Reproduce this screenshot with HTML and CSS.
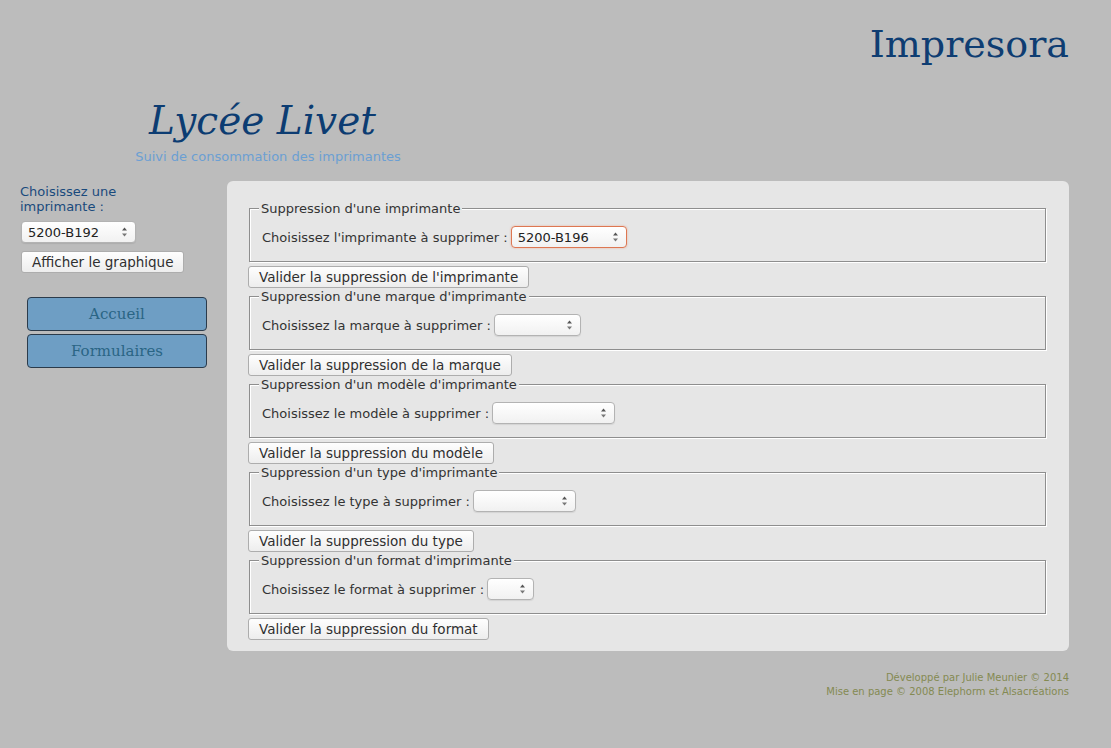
FILE: index.html
```html
<!DOCTYPE html>
<html lang="fr">
<head>
<meta charset="utf-8">
<title>Impresora</title>
<link rel="stylesheet" href="styles.css">
</head>
<body>
<div class="page">
  <header class="top">
    <h1 class="app-title">Impresora</h1>
  </header>
  <div class="school">
    <h2 class="school-name">Lycée Livet</h2>
    <p class="school-sub">Suivi de consommation des imprimantes</p>
  </div>
  <div class="main">
    <aside class="sidebar">
      <label class="side-label" for="imp">Choisissez une imprimante :</label>
      <span class="sel sel-side">
        <select id="imp"><option>5200-B192</option></select>
        <svg class="arrows" width="7" height="10" viewBox="0 0 7 10"><path d="M3.5 0.5 L6 3.5 L1 3.5 Z" fill="#555"/><path d="M1 6.5 L6 6.5 L3.5 9.5 Z" fill="#777"/></svg>
      </span>
      <button class="btn side-btn">Afficher le graphique</button>
      <nav class="nav">
        <a class="nav-item" href="#">Accueil</a>
        <a class="nav-item" href="#">Formulaires</a>
      </nav>
    </aside>
    <section class="panel">
      <fieldset class="group">
        <legend>Suppression d'une imprimante</legend>
        <div class="row">
          <label>Choisissez l'imprimante à supprimer :</label>
          <span class="sel sel-imp focused">
            <select><option>5200-B196</option></select>
            <svg class="arrows" width="7" height="10" viewBox="0 0 7 10"><path d="M3.5 0.5 L6 3.5 L1 3.5 Z" fill="#555"/><path d="M1 6.5 L6 6.5 L3.5 9.5 Z" fill="#777"/></svg>
          </span>
        </div>
      </fieldset>
      <button class="btn">Valider la suppression de l'imprimante</button>

      <fieldset class="group">
        <legend>Suppression d'une marque d'imprimante</legend>
        <div class="row">
          <label>Choisissez la marque à supprimer :</label>
          <span class="sel sel-marque">
            <select></select>
            <svg class="arrows" width="7" height="10" viewBox="0 0 7 10"><path d="M3.5 0.5 L6 3.5 L1 3.5 Z" fill="#555"/><path d="M1 6.5 L6 6.5 L3.5 9.5 Z" fill="#777"/></svg>
          </span>
        </div>
      </fieldset>
      <button class="btn">Valider la suppression de la marque</button>

      <fieldset class="group">
        <legend>Suppression d'un modèle d'imprimante</legend>
        <div class="row">
          <label>Choisissez le modèle à supprimer :</label>
          <span class="sel sel-modele">
            <select></select>
            <svg class="arrows" width="7" height="10" viewBox="0 0 7 10"><path d="M3.5 0.5 L6 3.5 L1 3.5 Z" fill="#555"/><path d="M1 6.5 L6 6.5 L3.5 9.5 Z" fill="#777"/></svg>
          </span>
        </div>
      </fieldset>
      <button class="btn">Valider la suppression du modèle</button>

      <fieldset class="group">
        <legend>Suppression d'un type d'imprimante</legend>
        <div class="row">
          <label>Choisissez le type à supprimer :</label>
          <span class="sel sel-type">
            <select></select>
            <svg class="arrows" width="7" height="10" viewBox="0 0 7 10"><path d="M3.5 0.5 L6 3.5 L1 3.5 Z" fill="#555"/><path d="M1 6.5 L6 6.5 L3.5 9.5 Z" fill="#777"/></svg>
          </span>
        </div>
      </fieldset>
      <button class="btn">Valider la suppression du type</button>

      <fieldset class="group">
        <legend>Suppression d'un format d'imprimante</legend>
        <div class="row">
          <label>Choisissez le format à supprimer :</label>
          <span class="sel sel-format">
            <select></select>
            <svg class="arrows" width="7" height="10" viewBox="0 0 7 10"><path d="M3.5 0.5 L6 3.5 L1 3.5 Z" fill="#555"/><path d="M1 6.5 L6 6.5 L3.5 9.5 Z" fill="#777"/></svg>
          </span>
        </div>
      </fieldset>
      <button class="btn">Valider la suppression du format</button>
    </section>
  </div>
  <footer class="footer">
    <p>Développé par Julie Meunier © 2014</p>
    <p>Mise en page © 2008 Elephorm et Alsacréations</p>
  </footer>
</div>
</body>
</html>
```
FILE: styles.css
```css
html, body {
  margin: 0;
  padding: 0;
  background: #bcbcbc;
}
body {
  font-family: "DejaVu Sans", sans-serif;
  font-size: 13px;
  color: #333;
}
.page {
  width: 1111px;
  height: 748px;
  box-sizing: border-box;
  padding-right: 42px;
  overflow: hidden;
}
.top {
  text-align: right;
}
.app-title {
  margin: 21px 0 0;
  font-family: "DejaVu Serif", serif;
  font-weight: normal;
  font-size: 38px;
  line-height: 46px;
  color: #0e3d72;
}
.school {
  width: 536px;
  text-align: center;
  margin-top: 30px;
}
.school-name {
  margin: 0;
  padding-right: 11px;
  font-family: "DejaVu Serif", serif;
  font-style: italic;
  font-weight: normal;
  font-size: 39px;
  line-height: 48px;
  color: #0c3c72;
}
.school-sub {
  margin: 4px 0 0;
  font-size: 13px;
  line-height: 16px;
  color: #6b9fd3;
}
.main {
  display: flex;
  margin-top: 16px;
  align-items: flex-start;
}
.sidebar {
  width: 227px;
  flex: none;
  display: flex;
  flex-direction: column;
  align-items: flex-start;
}
.side-label {
  display: block;
  width: 150px;
  margin: 3px 0 0 20px;
  line-height: 15px;
  color: #194a7c;
}
.sel {
  position: relative;
  display: inline-block;
  vertical-align: middle;
  height: 22px;
}
.sel select {
  -webkit-appearance: none;
  appearance: none;
  box-sizing: border-box;
  width: 100%;
  height: 22px;
  margin: 0;
  padding: 0 20px 0 6px;
  border: 1px solid #b3b3b3;
  border-radius: 4px;
  background: linear-gradient(#ffffff, #f1f1f1);
  box-shadow: 0 1px 1px rgba(0,0,0,0.08);
  font-family: "DejaVu Sans", sans-serif;
  font-size: 13px;
  color: #222;
  outline: none;
}
.sel .arrows {
  position: absolute;
  right: 8px;
  top: 6px;
  pointer-events: none;
}
.sel.focused select {
  border-color: #dd7752;
  box-shadow: 0 0 2px rgba(240,130,90,0.6);
}
.sel-side {
  width: 115px;
  margin: 7px 0 0 21px;
}
.sel-imp { width: 116px; }
.sel-marque { width: 87px; }
.sel-modele { width: 123px; }
.sel-type { width: 103px; }
.sel-format { width: 47px; }

.btn {
  display: block;
  box-sizing: border-box;
  height: 22px;
  margin: 4px 0 1px;
  padding: 0 10px;
  border: 1px solid #adadad;
  border-radius: 3px;
  background: linear-gradient(#fefefe, #ededed);
  font-family: "DejaVu Sans", sans-serif;
  font-size: 13.5px;
  line-height: 20px;
  color: #2f2f2f;
  white-space: nowrap;
}
.side-btn {
  margin: 8px 0 0 21px;
  height: 22px;
  line-height: 20px;
}
.nav {
  display: flex;
  flex-direction: column;
  gap: 3px;
  margin: 24px 0 0 27px;
}
.nav-item {
  display: block;
  box-sizing: border-box;
  width: 180px;
  height: 34px;
  line-height: 33px;
  text-align: center;
  background: #6e9ec4;
  border: 1px solid #2b3b4b;
  border-radius: 4px;
  font-family: "DejaVu Serif", serif;
  font-size: 15px;
  color: #2a6585;
  text-decoration: none;
}
.panel {
  flex: 1;
  background: #e6e6e6;
  border-radius: 6px;
  padding: 20px 21px 10px;
}
.group {
  margin: 0 2px 0 1px;
  padding: 0 9px 13px;
  border: 1px solid #8e8e8e;
  box-shadow: inset 1px 1px 0 #ffffff, 1px 1px 0 #ffffff;
}
.group legend {
  padding: 0 2px;
  font-size: 13px;
  line-height: 15px;
  color: #333;
  background: #e6e6e6;
}
.row {
  margin: 10px 0 0 3px;
  height: 22px;
  display: flex;
  align-items: center;
  gap: 3px;
  color: #333;
}
.footer {
  margin-top: 20px;
  text-align: right;
  font-size: 10px;
  line-height: 14px;
  color: #848a52;
}
.footer p {
  margin: 0;
}
```
